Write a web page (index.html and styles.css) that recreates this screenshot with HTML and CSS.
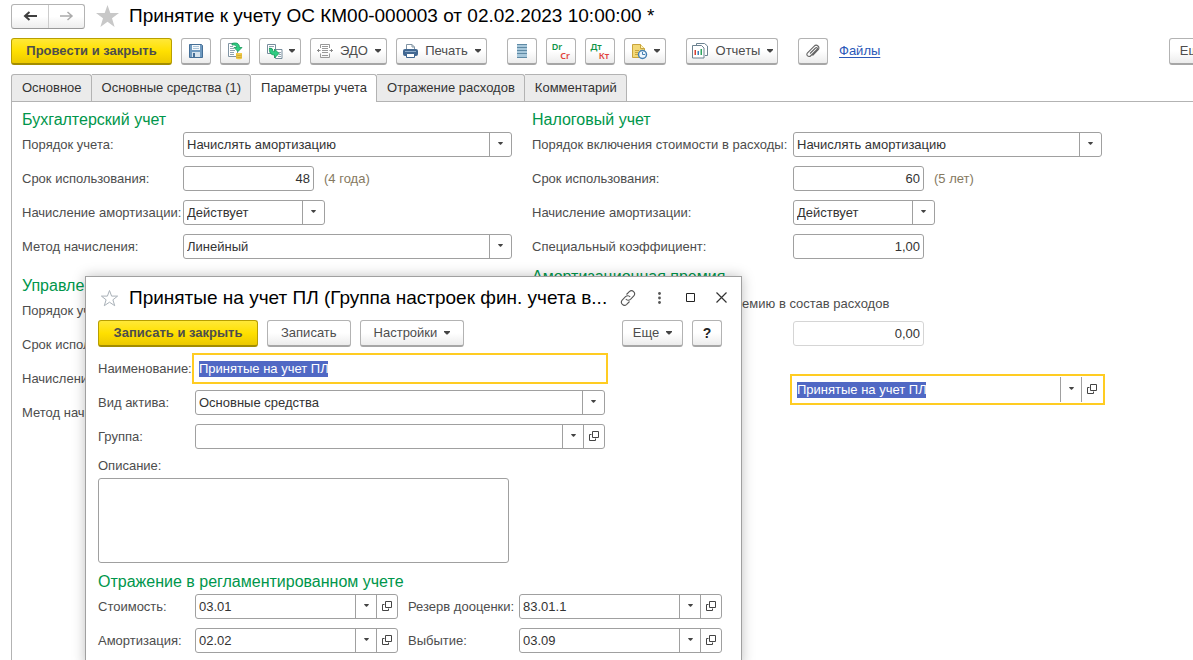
FILE: index.html
```html
<!DOCTYPE html>
<html lang="ru">
<head>
<meta charset="utf-8">
<title>Принятие к учету ОС</title>
<link rel="stylesheet" href="styles.css">
</head>
<body>
<svg class="sprite" aria-hidden="true">
  <symbol id="caret" viewBox="0 0 6 4"><path d="M0 0h6v1L3.500 3.500h-1L0 1z" fill="#444"/></symbol>
  <symbol id="open" viewBox="0 0 10 10"><path d="M3.500.5h6v6h-6zM2.500 3.500H.5v6h6V7.500" fill="none" stroke="#444"/></symbol>
</svg>
<div class="app">
  <header class="titlebar">
    <div class="history">
      <button type="button" aria-label="Назад"><svg width="15" height="12" viewBox="0 0 15 12"><path d="M2 6h12M6.500 2L2 6l4.500 4" fill="none" stroke="#3f3f3f" stroke-width="2"/></svg></button>
      <button type="button" aria-label="Вперед"><svg width="15" height="12" viewBox="0 0 15 12"><path d="M1 6h12M8.500 2L13 6l-4.500 4" fill="none" stroke="#ababab" stroke-width="1.500"/></svg></button>
    </div>
    <svg class="star" width="23" height="22" viewBox="0 0 23 22"><path d="M11.500 0l2.800 8H23l-7 5.300L18.600 22l-7.100-5.200L4.400 22 7 13.300 0 8h8.700z" fill="#c8c8c8"/></svg>
    <h1 class="title">Принятие к учету ОС КМ00-000003 от 02.02.2023 10:00:00 *</h1>
  </header>

  <div class="toolbar">
    <div class="group">
      <button type="button" class="btn primary post">Провести и закрыть</button>
      <button type="button" class="btn icon" aria-label="Записать"><svg width="16" height="16" viewBox="0 0 16 16"><path d="M1.500 1.500h12l1 1v12h-13z" fill="#6f9ac0" stroke="#456f97"/><path d="M4 2h8v5H4z" fill="#f4f8fb"/><path d="M5 3.500h6M5 5.500h6" stroke="#a9c3d8"/><path d="M4 9h8v5H4z" fill="#d6e3ee"/><path d="M5 10h2v4H5z" fill="#456f97"/></svg></button>
      <button type="button" class="btn icon" aria-label="Провести"><svg width="18" height="18" viewBox="0 0 18 18"><path d="M2.500 1.500h9v13h-9z" fill="#fff" stroke="#8194a3"/><path d="M4 4.500h3M4 6.500h4M4 8.500h5M4 10.500h4M4 12.500h4" stroke="#91a3b1"/><path d="M6 1.500c5-1.500 7.500.5 7.500 4h2.500L12 9.500 8 5.500h2.500c0-2-1.500-3-4.500-2.500z" fill="#2ecc82" stroke="#139555" stroke-width=".8"/><path d="M10 11h6v5.500c0 1-6 1-6 0z" fill="#f0cb4b"/><path d="M10 13q3 1.200 6 0M10 15q3 1.200 6 0" fill="none" stroke="#c79c22" stroke-width=".7"/></svg></button>
      <button type="button" class="btn drop" aria-label="Создать на основании"><svg width="17" height="17" viewBox="0 0 17 17"><path d="M1.500 1.500h8v9h-8z" fill="#fff" stroke="#768c9c"/><path d="M3 3.500h5M3 5.500h3" stroke="#91a3b1"/><path d="M9.500 6.500h6.500v9H9.500z" fill="#fff" stroke="#768c9c"/><path d="M12 9.500h3M13 11.500h2M12 13.500h3" stroke="#91a3b1"/><path d="M3.500 5l3 1c0 2 .5 2.500 2 2.500V6l4.500 4.500-4.500 4.500v-3c-4 0-5.500-3-5-7z" fill="#2ecc82" stroke="#139555" stroke-width=".8"/></svg><svg class="caret"><use href="#caret"/></svg></button>
      <button type="button" class="btn labelled edo"><svg width="16" height="14" viewBox="0 0 16 14"><path d="M3.500 4V.5h9V4M3.500 9.500v4h9v-4" fill="none" stroke="#999"/><path d="M5 2.500h6M5 4.500h6M5 6.500h6M5 8.500h6M5 11.500h6" stroke="#999"/><path d="M0 6.500h3.500M1.500 5v3M16 6.500h-3.500M14.500 5v3" fill="none" stroke="#888"/></svg>ЭДО<svg class="caret"><use href="#caret"/></svg></button>
      <button type="button" class="btn labelled print"><svg width="15" height="15" viewBox="0 0 15 15"><path d="M3.500 6V.5H9L11.500 3v3z" fill="#fff" stroke="#8194a3"/><path d="M9 .5V3h2.500" fill="none" stroke="#8194a3"/><rect y="5" width="15" height="7" rx="2" fill="#416791"/><path d="M2 7.500h11" stroke="#8dacca"/><path d="M3.500 9.500h8v4h-8z" fill="#fff" stroke="#416791"/></svg>Печать<svg class="caret"><use href="#caret"/></svg></button>
    </div>
    <div class="group">
      <button type="button" class="btn icon" aria-label="Реестр"><svg width="10" height="14" viewBox="0 0 10 14"><path d="M0 0h10v14H0z" fill="#a8c8db"/><path d="M0 .5h10M0 3.500h10M0 6.500h10M0 9.500h10M0 13.500h10" stroke="#5f8aa5"/></svg></button>
      <button type="button" class="btn icon ledger" aria-label="Проводки Dr/Cr"><span class="debit">Dr</span><span class="credit">Cr</span></button>
      <button type="button" class="btn icon ledger" aria-label="Проводки Дт/Кт"><span class="debit">Дт</span><span class="credit">Кт</span></button>
      <button type="button" class="btn drop" aria-label="Задачи"><svg width="17" height="17" viewBox="0 0 17 17"><path d="M1.500 1.500h8l4 4v9h-12z" fill="#f3d978" stroke="#c9a43c"/><path d="M9.500 1.500v4h4" fill="#fff3b8" stroke="#c9a43c"/><path d="M4 7.500h4M4 9.500h3M4 11.500h3" stroke="#c9a43c"/><circle cx="11.500" cy="11.500" r="4" fill="#eff7fd" stroke="#4781b3" stroke-width="1.500"/><path d="M11.500 9v2.500H14" fill="none" stroke="#4781b3"/></svg><svg class="caret"><use href="#caret"/></svg></button>
    </div>
    <div class="group">
      <button type="button" class="btn labelled reports"><svg width="17" height="16" viewBox="0 0 17 16"><path d="M4.500 2V.5h8L15.500 3v9.500H13" fill="#fff" stroke="#6c8290"/><path d="M.5 2.500h9L12 5v10H.5z" fill="#fff" stroke="#6c8290"/><path d="M2.500 7H4v5H2.500z" fill="#d83e31"/><path d="M5.500 8H7v4H5.500z" fill="#397eb7"/><path d="M8.500 6H10v6H8.500z" fill="#30a660"/></svg>Отчеты<svg class="caret"><use href="#caret"/></svg></button>
    </div>
    <div class="group">
      <button type="button" class="btn icon" aria-label="Прикрепить"><svg width="14" height="14" viewBox="0 0 14 14"><path d="M4 9.500L9.500 4c1.500-1 2.500.3 1.500 1.500l-6 6C2.500 14-.5 11 1.500 8.800L8 2.300C10.700-.5 14.500 3 12 6l-5.500 5.500" fill="none" stroke="#666" stroke-width="1.100"/></svg></button>
      <a class="files" href="#files">Файлы</a>
    </div>
    <button type="button" class="btn more">Еще<svg class="caret"><use href="#caret"/></svg></button>
  </div>

  <nav class="tabs">
    <button type="button" class="tab">Основное</button>
    <button type="button" class="tab">Основные средства (1)</button>
    <button type="button" class="tab active">Параметры учета</button>
    <button type="button" class="tab">Отражение расходов</button>
    <button type="button" class="tab">Комментарий</button>
  </nav>

  <main class="panel">
    <div class="column">
      <section class="section">
        <h2>Бухгалтерский учет</h2>
        <div class="row"><label for="b1">Порядок учета:</label><div class="field"><select id="b1"><option>Начислять амортизацию</option></select><span class="cell"><svg class="caret"><use href="#caret"/></svg></span></div></div>
        <div class="row"><label for="b2">Срок использования:</label><div class="field number"><input id="b2" value="48"></div><span class="note">(4 года)</span></div>
        <div class="row"><label for="b3">Начисление амортизации:</label><div class="field short"><select id="b3"><option>Действует</option></select><span class="cell"><svg class="caret"><use href="#caret"/></svg></span></div></div>
        <div class="row"><label for="b4">Метод начисления:</label><div class="field"><select id="b4"><option>Линейный</option></select><span class="cell"><svg class="caret"><use href="#caret"/></svg></span></div></div>
      </section>
      <section class="section">
        <h2>Управленческий учет</h2>
        <div class="row"><label for="u1">Порядок учета:</label><div class="field"><select id="u1"><option>Начислять амортизацию</option></select><span class="cell"><svg class="caret"><use href="#caret"/></svg></span></div></div>
        <div class="row"><label for="u2">Срок использования:</label><div class="field number"><input id="u2" value="48"></div></div>
        <div class="row"><label for="u3">Начисление амортизации:</label><div class="field short"><select id="u3"><option>Действует</option></select><span class="cell"><svg class="caret"><use href="#caret"/></svg></span></div></div>
        <div class="row"><label for="u4">Метод начисления:</label><div class="field short"><select id="u4"><option>Линейный</option></select><span class="cell"><svg class="caret"><use href="#caret"/></svg></span></div></div>
      </section>
    </div>
    <div class="column tax">
      <section class="section">
        <h2>Налоговый учет</h2>
        <div class="row"><label for="n1">Порядок включения стоимости в расходы:</label><div class="field"><select id="n1"><option>Начислять амортизацию</option></select><span class="cell"><svg class="caret"><use href="#caret"/></svg></span></div></div>
        <div class="row"><label for="n2">Срок использования:</label><div class="field number"><input id="n2" value="60"></div><span class="note">(5 лет)</span></div>
        <div class="row"><label for="n3">Начисление амортизации:</label><div class="field short"><select id="n3"><option>Действует</option></select><span class="cell"><svg class="caret"><use href="#caret"/></svg></span></div></div>
        <div class="row"><label for="n4">Специальный коэффициент:</label><div class="field number"><input id="n4" value="1,00"></div></div>
      </section>
      <section class="section bonus">
        <h2>Амортизационная премия</h2>
        <div class="check"><input type="checkbox" id="p0"><label for="p0">Включить амортизационную премию в состав расходов</label></div>
        <div class="row"><label for="p1">Процент:</label><div class="field number disabled"><input id="p1" value="0,00" readonly></div></div>
      </section>
      <section class="section finance">
        <div class="row"><label for="f1">Группа фин. учета:</label><div class="field focused"><span class="value"><input class="selected" id="f1" value="Принятые на учет ПЛ"></span><button type="button" class="cell" aria-label="Выбрать"><svg class="caret"><use href="#caret"/></svg></button><button type="button" class="cell" aria-label="Открыть"><svg class="open"><use href="#open"/></svg></button></div></div>
      </section>
    </div>
  </main>

  <div class="dialog" role="dialog" aria-labelledby="dialog-title">
    <header class="dialog-head">
      <svg class="star" width="19" height="18" viewBox="0 0 19 18"><path d="M9.500 1.500l2.100 5.600h6l-4.700 3.700 1.800 5.900-5.200-3.500-5.200 3.500 1.800-5.900L1.400 7.100h6z" fill="none" stroke="#a9b1b8"/></svg>
      <h1 class="title" id="dialog-title">Принятые на учет ПЛ (Группа настроек фин. учета в...</h1>
      <div class="window-tools">
        <button type="button" aria-label="Ссылка"><svg width="16" height="16" viewBox="0 0 16 16"><path d="M6.500 4.500l2.800-2.800c3-2.700 7 1.200 4.500 4.300L10.500 9.300C9 10.600 7 10.500 5.800 9M9.500 11.500l-2.800 2.800c-3 2.700-7-1.200-4.500-4.300l3.300-3.300C7 5.400 9 5.500 10.200 7" fill="none" stroke="#555" stroke-width="1.100"/></svg></button>
        <button type="button" aria-label="Меню"><svg width="16" height="16" viewBox="0 0 16 16"><g fill="#555"><circle cx="8.500" cy="3.500" r="1.400"/><circle cx="8.500" cy="8" r="1.400"/><circle cx="8.500" cy="12.500" r="1.400"/></g></svg></button>
        <button type="button" aria-label="Развернуть"><svg width="16" height="16" viewBox="0 0 16 16"><path d="M4.500 3.500h8v8h-8z" fill="none" stroke="#222"/></svg></button>
        <button type="button" aria-label="Закрыть"><svg width="16" height="16" viewBox="0 0 16 16"><path d="M3.500 2.500l10 10m0-10l-10 10" stroke="#333" stroke-width="1.200"/></svg></button>
      </div>
    </header>
    <div class="dialog-bar">
      <button type="button" class="btn primary">Записать и закрыть</button>
      <button type="button" class="btn">Записать</button>
      <button type="button" class="btn settings">Настройки<svg class="caret"><use href="#caret"/></svg></button>
      <button type="button" class="btn more">Еще<svg class="caret"><use href="#caret"/></svg></button>
      <button type="button" class="btn icon help">?</button>
    </div>
    <div class="dialog-form">
      <div class="row"><label for="d1">Наименование:</label><div class="field focused"><span class="value"><input class="selected" id="d1" value="Принятые на учет ПЛ"></span></div></div>
      <div class="row"><label for="d2">Вид актива:</label><div class="field"><select id="d2"><option>Основные средства</option></select><span class="cell"><svg class="caret"><use href="#caret"/></svg></span></div></div>
      <div class="row"><label for="d3">Группа:</label><div class="field"><input id="d3"><button type="button" class="cell" aria-label="Выбрать"><svg class="caret"><use href="#caret"/></svg></button><button type="button" class="cell" aria-label="Открыть"><svg class="open"><use href="#open"/></svg></button></div></div>
      <div class="description"><label for="d4">Описание:</label><textarea id="d4"></textarea></div>
    </div>
    <h2>Отражение в регламентированном учете</h2>
    <div class="accounts">
      <div class="row"><label for="a1">Стоимость:</label><div class="field"><input id="a1" value="03.01"><button type="button" class="cell" aria-label="Выбрать"><svg class="caret"><use href="#caret"/></svg></button><button type="button" class="cell" aria-label="Открыть"><svg class="open"><use href="#open"/></svg></button></div></div>
      <div class="row second"><label for="a2">Резерв дооценки:</label><div class="field"><input id="a2" value="83.01.1"><button type="button" class="cell" aria-label="Выбрать"><svg class="caret"><use href="#caret"/></svg></button><button type="button" class="cell" aria-label="Открыть"><svg class="open"><use href="#open"/></svg></button></div></div>
      <div class="row"><label for="a3">Амортизация:</label><div class="field"><input id="a3" value="02.02"><button type="button" class="cell" aria-label="Выбрать"><svg class="caret"><use href="#caret"/></svg></button><button type="button" class="cell" aria-label="Открыть"><svg class="open"><use href="#open"/></svg></button></div></div>
      <div class="row second"><label for="a4">Выбытие:</label><div class="field"><input id="a4" value="03.09"><button type="button" class="cell" aria-label="Выбрать"><svg class="caret"><use href="#caret"/></svg></button><button type="button" class="cell" aria-label="Открыть"><svg class="open"><use href="#open"/></svg></button></div></div>
    </div>
  </div>
</div>
</body>
</html>
```
FILE: styles.css
```css
* { box-sizing: border-box; }
body {
  margin: 0;
  font: 13px/16px "Liberation Sans", Arial, sans-serif;
  color: #4d4d4d;
  background: #fff;
}
button, input, select, textarea { font: inherit; color: inherit; margin: 0; }
h1, h2 { margin: 0; font-weight: 400; }
svg { flex: none; }
.sprite { position: absolute; width: 0; height: 0; }
.caret { width: 6px; height: 4px; }
.open { width: 10px; height: 10px; }

.app {
  position: relative;
  display: flex;
  flex-direction: column;
  height: 100vh;
  padding: 3px 0 0 11px;
  overflow: hidden;
}

/* Title */
.titlebar { display: flex; align-items: center; height: 26px; }
.history {
  display: flex;
  border: 1px solid #b3b3b3;
  border-bottom-color: #999;
  border-radius: 3px;
  background: linear-gradient(#fff 50%, #ededed);
}
.history button {
  display: flex;
  align-items: center;
  justify-content: center;
  width: 36px;
  height: 23px;
  padding: 0;
  border: 0;
  background: none;
}
.history button + button { border-left: 1px solid #ccc; }
.star { margin: 0 10px 0 11px; }
.title { font-size: 19px; line-height: 24px; color: #000; white-space: nowrap; }

/* Buttons */
.toolbar { display: flex; gap: 20px; width: calc(100% + 37px); margin-top: 9px; }
.group { display: flex; gap: 9px; }
.btn {
  display: flex;
  align-items: center;
  justify-content: center;
  gap: 7px;
  height: 27px;
  padding: 0 13px;
  border: 1px solid #b3b3b3;
  border-bottom: 2px solid #a6a6a6;
  border-radius: 3px;
  background: linear-gradient(#fff 50%, #ececec);
  white-space: nowrap;
}
.primary {
  min-width: 160px;
  border-color: #b89f00;
  border-bottom-color: #a38d00;
  background: linear-gradient(#ffe838, #ffe000 50%, #ecc900);
  font-weight: 700;
}
.post { min-width: 161px; }
.icon { width: 30px; padding: 0; }
.drop { width: 42px; padding: 0; gap: 6px; }
.labelled { padding: 0 6px 0 7px; }
.edo { width: 77px; }
.print { width: 91px; }
.reports { width: 92px; }
.more { width: 61px; margin-left: auto; }
.ledger { flex-direction: column; gap: 0; font: 600 9px/9px "Noto Sans", sans-serif; }
.debit { margin-right: 8px; color: #0f9446; }
.credit { margin-left: 8px; color: #e2423a; }
.files { margin-left: 2px; font-size: 13px; line-height: 26px; color: #2a58b8; text-underline-offset: 2px; }

/* Tabs */
.tabs { display: flex; margin-top: 9px; }
.tab {
  height: 27px;
  padding: 0 9px 0 10px;
  border: 1px solid #b3b3b3;
  border-left-width: 0;
  border-bottom: 0;
  border-radius: 0 3px 0 0;
  background: #ebebeb;
  color: #333;
}
.tab:first-child { border-left-width: 1px; border-radius: 3px 3px 0 0; }
.tab.active { position: relative; height: 28px; margin-bottom: -1px; padding-bottom: 1px; background: #fff; }

/* Form */
.panel {
  display: grid;
  grid-template-columns: minmax(0, 490px) minmax(0, 570px);
  gap: 20px;
  flex: 1;
  padding: 5px 10px 0;
  border: solid #b3b3b3;
  border-width: 1px 0 0 1px;
}
h2 { font-size: 16px; line-height: 25px; color: #00964b; white-space: nowrap; }
.section { display: flex; flex-direction: column; gap: 9px; }
.section h2 { margin-bottom: -9px; }
.column { display: flex; flex-direction: column; gap: 14px; }
.tax { gap: 5px; }
.row { display: grid; grid-template-columns: 161px minmax(0, 1fr); align-items: center; height: 25px; white-space: nowrap; }
.tax .row { grid-template-columns: 261px minmax(0, 1fr); }
.row:has(.note) { grid-template-columns: 161px 131px 1fr; }
.tax .row:has(.note) { grid-template-columns: 261px 131px 1fr; }
.note { margin-left: 10px; color: #85795f; }
.field {
  display: flex;
  height: 25px;
  border: 1px solid #a0a0a0;
  border-radius: 3px;
  background: #fff;
  color: #333;
}
.field input, .field select {
  appearance: none;
  flex: 1;
  min-width: 0;
  padding: 0 3px;
  border: 0;
  outline: 0;
  background: none;
}
.number { width: 131px; }
.number input { text-align: right; }
.short { width: 142px; }
.disabled { border-color: #d5d5d5; }
.cell {
  display: flex;
  flex: none;
  align-items: center;
  justify-content: center;
  width: 22px;
  padding: 0 0 2px;
  border: 0;
  border-left: 1px solid #a0a0a0;
  background: none;
}
.cell .caret { width: 5px; height: 3px; }
.cell + .cell { width: 21px; }
.cell:has(+ .cell) { width: 21px; }
.field.focused { height: 31px; margin: -3px; padding: 1px; border: 2px solid #fc2; border-radius: 0; }
.value { display: flex; flex: 1; align-items: center; padding-left: 4px; }
.field input.selected { flex: none; width: 129px; height: 16px; padding: 0; background: #5068c4; color: #fff; }
.bonus { gap: 5px; }
.bonus h2 { margin-bottom: -3px; }
.check { display: flex; align-items: center; gap: 8px; height: 25px; white-space: nowrap; }
.check input { width: 13px; height: 13px; margin: 0; }
.finance { padding-top: 26px; }

/* Dialog */
.dialog {
  position: absolute;
  left: 85px;
  top: 276px;
  width: 657px;
  padding: 7px 19px 12px 12px;
  border: 1px solid #a0a0a0;
  background: #fff;
  box-shadow: 0 0 12px rgba(0, 0, 0, .25);
}
.dialog-head { display: flex; align-items: center; height: 27px; }
.dialog-head .star { margin: 0 10px 0 2px; }
.window-tools { display: flex; gap: 15px; margin: 0 -7px 0 auto; }
.window-tools button { display: flex; padding: 0; border: 0; background: none; }
.dialog-bar { display: flex; gap: 9px; margin: 9px 0; }
.help { font-size: 14px; font-weight: 700; color: #222; }
.dialog-form { display: flex; flex-direction: column; gap: 9px; width: 507px; max-width: 100%; }
.dialog .row { grid-template-columns: 97px minmax(0, 1fr); }
.description { display: flex; flex-direction: column; gap: 4px; }
textarea { width: 411px; height: 85px; border: 1px solid #a0a0a0; border-radius: 3px; resize: none; }
.dialog h2 { margin-top: 6px; }
.accounts { display: grid; grid-template-columns: 300px 314px; gap: 9px 10px; }
.dialog .accounts .second { grid-template-columns: 111px minmax(0, 1fr); }
```
